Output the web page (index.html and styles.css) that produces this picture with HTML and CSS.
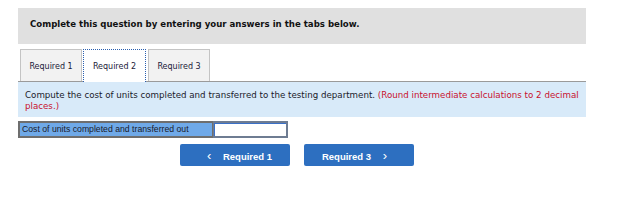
FILE: index.html
```html
<!DOCTYPE html>
<html lang="en">
<head>
  <meta charset="UTF-8" />
  <title>Required 2</title>
  <link rel="stylesheet" href="styles.css">
</head>
<body>
  <div class="q-wrap">
    <div class="q-header">Complete this question by entering your answers in the tabs below.</div>

    <div class="q-tabs">
      <div class="q-tab">Required 1</div>
      <div class="q-tab q-tab-active">Required 2</div>
      <div class="q-tab">Required 3</div>
    </div>

    <div class="q-info">
      <div>Compute the cost of units completed and transferred to the testing department. <span class="q-note">(Round intermediate calculations to 2 decimal</span></div>
      <div class="q-note">places.)</div>
    </div>

    <div class="q-row">
      <div class="q-label">Cost of units completed and transferred out</div>
      <input class="q-input" type="text" />
    </div>

    <div class="q-nav">
      <button class="q-btn"><span class="q-arrow">&lsaquo;</span> Required 1</button>
      <button class="q-btn">Required 3 <span class="q-arrow">&rsaquo;</span></button>
    </div>
  </div>
</body>
</html>
```

FILE: styles.css
```css
body {
  margin: 8px 0 0 18px;
  background: #fff;
  font-family: "DejaVu Sans", Verdana, sans-serif;
  color: #111;
}

.q-wrap {
  width: 568px;
}

.q-header {
  background: #e0e0e0;
  height: 36px;
  box-sizing: border-box;
  padding: 11px 0 0 12px;
  font-size: 8.6px;
  font-weight: bold;
}

.q-tabs {
  display: flex;
  gap: 1px;
  margin-top: 5px;
  padding-left: 2px;
  border-bottom: 1px solid #9a9a9a;
}

.q-tab {
  width: 62px;
  height: 32px;
  box-sizing: border-box;
  border: 1px solid #c4c4c4;
  border-bottom: none;
  background: #f2f2f2;
  font-size: 8px;
  text-align: center;
  line-height: 33px;
  color: #1a1a3a;
}

.q-tab-active {
  width: 63px;
  background: #fff;
  border: 1px dotted #2a5fb0;
  border-bottom: none;
  margin-bottom: -1px;
  height: 33px;
}

.q-tab-active + .q-tab {
  margin-left: 1px;
}

.q-info {
  background: #d8eaf9;
  height: 35px;
  box-sizing: border-box;
  padding: 8px 7px 0 7px;
  font-size: 8.7px;
  line-height: 10.5px;
  color: #1a1a2a;
}

.q-note {
  color: #c8102e;
}

.q-row {
  display: flex;
  margin-top: 4px;
  height: 17px;
}

.q-label {
  width: 195px;
  box-sizing: border-box;
  background: #6fa9e8;
  border: 2px solid #6e6e6e;
  border-right: 1px solid #6e6e6e;
  font-family: "Liberation Sans", Arial, sans-serif;
  font-size: 8.7px;
  line-height: 13px;
  padding-left: 2px;
  color: #1a1a2a;
}

.q-input {
  width: 75px;
  height: 17px;
  box-sizing: border-box;
  margin: 0;
  padding: 0;
  border: 2px solid #6e7c92;
  border-left: 1px solid #6e7c92;
  background: #fff;
  box-shadow: inset 2px 2px 0 -1px #3a70c8;
}

.q-nav {
  display: flex;
  gap: 14px;
  margin: 6px 0 0 162px;
}

.q-btn {
  width: 110px;
  height: 22px;
  border: none;
  border-radius: 2px;
  background: #2d6fc0;
  color: #fff;
  font-family: "Liberation Sans", Arial, sans-serif;
  font-size: 9.5px;
  font-weight: bold;
  padding: 0;
}

.q-arrow {
  font-size: 13px;
  font-weight: normal;
  margin: 0 9px;
}
```
